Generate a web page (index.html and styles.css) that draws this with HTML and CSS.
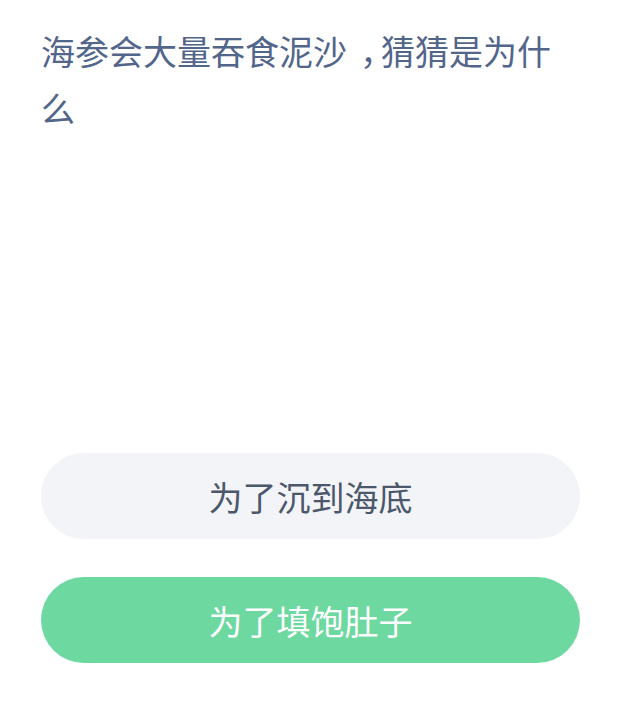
FILE: index.html
```html
<!DOCTYPE html>
<html lang="zh-CN">
<head>
    <meta charset="UTF-8">
    <meta name="viewport" content="width=device-width, initial-scale=1.0">
    <title>猜猜是为什么</title>
    <link rel="stylesheet" href="styles.css">
</head>
<body>
    <div class="quiz">
        <p class="question">海参会大量吞食泥沙<span class="punct">，</span>猜猜是为什么</p>
        <div class="picture"></div>
        <div class="options">
            <button class="option">为了沉到海底</button>
            <button class="option answer">为了填饱肚子</button>
        </div>
    </div>
</body>
</html>
```

FILE: styles.css
```css
body {
    margin: 0;
    padding: 0;
    background: #ffffff;
    font-family: "Noto Sans CJK SC", "Noto Sans", sans-serif;
}

.quiz {
    width: 630px;
    padding: 22px 0 0 41px;
    box-sizing: border-box;
}

.question {
    margin: 0;
    width: 525px;
    font-size: 34px;
    line-height: 57px;
    color: #52658a;
}

/* the comma sits in the middle of its cell in the original */
.punct {
    display: inline-block;
    width: 1em;
    padding-left: 13px;
    box-sizing: border-box;
    white-space: nowrap;
}

.picture {
    height: 317px;
}

.options {
    display: flex;
    flex-direction: column;
    gap: 38px;
    width: 539px;
}

.option {
    height: 86px;
    border: none;
    border-radius: 43px;
    background-color: #f3f4f7;
    color: #4b576b;
    font-family: inherit;
    font-size: 34px;
    padding: 0;
}

.answer {
    background-color: #6dd8a0;
    color: #ffffff;
}
```
